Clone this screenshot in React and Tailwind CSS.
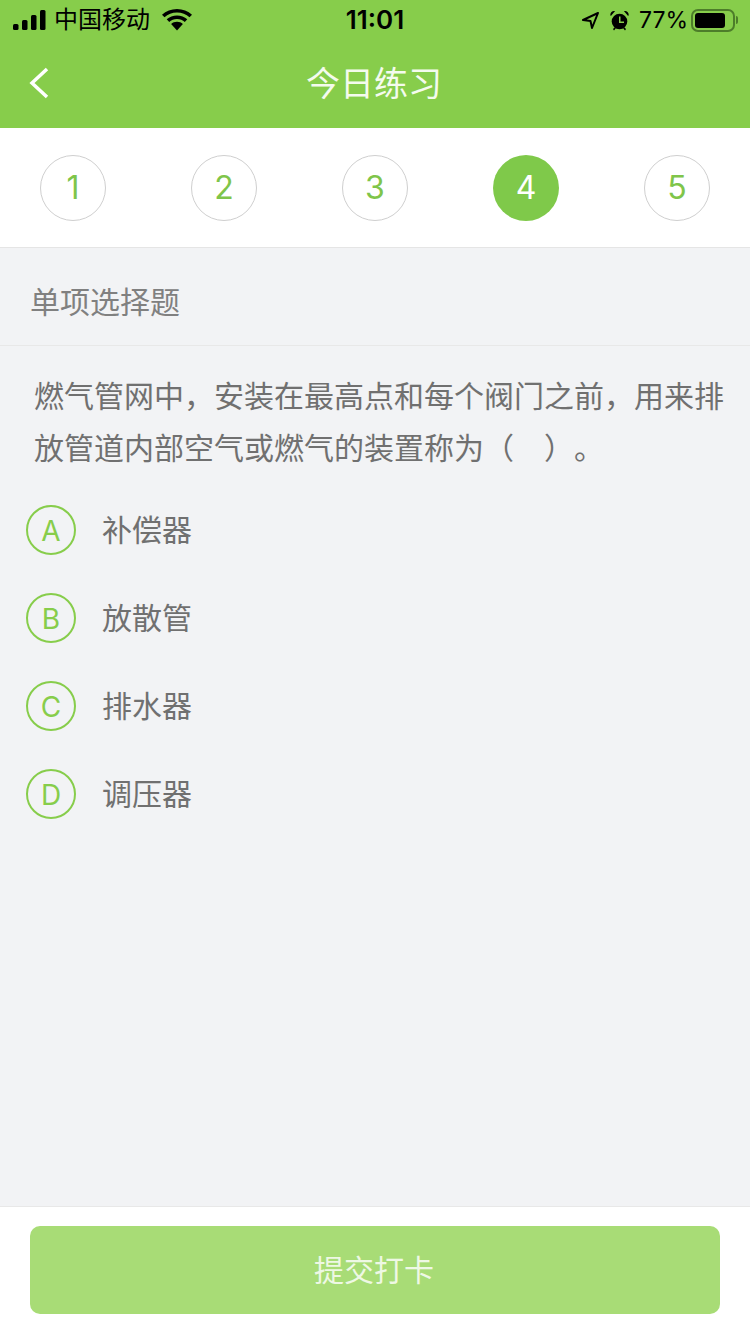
import React from 'react';

const font = "font-['Inter','Noto_Sans_CJK_SC',sans-serif]";

const steps = [1, 2, 3, 4, 5];
const options = [
  { key: 'A', text: '补偿器' },
  { key: 'B', text: '放散管' },
  { key: 'C', text: '排水器' },
  { key: 'D', text: '调压器' },
];

const StatusBar = () => (
  <div className="relative flex h-[40px] items-center justify-between pl-[13px] pr-[12px] text-black">
    <div className="flex items-center">
      <svg width="33" height="20" viewBox="0 0 33 20" fill="currentColor">
        <rect x="0" y="14" width="5.500" height="6" rx="1.500" />
        <rect x="9" y="10" width="5.500" height="10" rx="1.500" />
        <rect x="18" y="5" width="5.500" height="15" rx="1.500" />
        <rect x="27" y="0" width="5.500" height="20" rx="1.500" />
      </svg>
      <span className="ml-[8px] text-[24px] leading-none">中国移动</span>
      <svg className="ml-[12px]" width="30" height="22" viewBox="0 0 30 22" fill="currentColor">
        <path d="M15 3.500c4.800 0 9.200 1.800 12.500 4.800L30 5.700C26 2.200 20.800 0 15 0S4 2.200 0 5.700l2.500 2.600C5.800 5.300 10.200 3.500 15 3.500Z" />
        <path d="M15 10c3 0 5.700 1.100 7.800 2.900l2.500-2.600C22.500 7.900 18.900 6.400 15 6.400S7.500 7.900 4.700 10.300l2.500 2.600C9.300 11.100 12 10 15 10Z" />
        <path d="M15 12.800c-2.300 0-4.400.9-5.900 2.200l5.900 6.500 5.900-6.500c-1.500-1.300-3.600-2.200-5.900-2.200Z" />
      </svg>
    </div>
    <span className="absolute left-0 right-0 text-center text-[26px] font-semibold leading-none">11:01</span>
    <div className="relative flex items-center">
      <svg width="19" height="19" viewBox="0 0 19 19" fill="none" stroke="currentColor" strokeWidth="2">
        <path d="M17 2 2 9l7.500 1 1.500 7Z" strokeLinejoin="round" />
      </svg>
      <svg className="ml-[10px]" width="19" height="21" viewBox="0 0 19 21" fill="currentColor">
        <circle cx="9.500" cy="11.500" r="7.800" />
        <path d="M.5 5.500a3.600 3.600 0 0 1 4.600-4.400L.9 5.900ZM18.500 5.500a3.600 3.600 0 0 0-4.600-4.400l4.200 4.800Z" />
        <path d="M9 6.500h1.500v5h3.500V13H9Z" fill="#87cd4b" />
        <path d="M3 19l2-2 1 1-2 2.500ZM16 19l-2-2-1 1 2 2.500Z" />
      </svg>
      <span className="ml-[10px] text-[23px] leading-none">77%</span>
      <div className="ml-[3px] flex h-[23px] w-[44px] items-center rounded-[7px] border-2 border-[#4d7d2a] p-[2px]">
        <div className="h-full w-[30px] rounded-[3px] bg-black" />
      </div>
      <div className="ml-[1px] h-[8px] w-[2px] rounded-r-sm bg-[#4d7d2a]" />
    </div>
  </div>
);

const App = () => {
  return (
    <div className={`${font} flex h-[1334px] w-[750px] flex-col bg-[#f2f3f5]`}>
      {/* Header */}
      <div className="bg-[#87cd4b]">
        <StatusBar />
        <div className="relative flex h-[88px] items-center justify-center pr-[2px]">
          <svg className="absolute left-[29px] top-[27px]" width="20" height="32" viewBox="0 0 20 32" fill="none" stroke="white" strokeWidth="3.500">
            <path d="M18 2 3 16l15 14" />
          </svg>
          <span className="text-[34px] leading-none text-[#f4fbee]">今日练习</span>
        </div>
      </div>

      {/* Question numbers */}
      <div className="flex h-[120px] items-center justify-between border-b border-[#e5e5e5] bg-white px-[40px]">
        {steps.map((step) =>
          step === 4 ? (
            <div key={step} className="flex h-[66px] w-[66px] items-center justify-center rounded-full bg-[#7fc94a] text-[32px] text-white">
              {step}
            </div>
          ) : (
            <div key={step} className="flex h-[66px] w-[66px] items-center justify-center rounded-full border border-[#cfcfcf] text-[32px] text-[#7fc54a]">
              {step}
            </div>
          )
        )}
      </div>

      {/* Question */}
      <div className="flex h-[98px] items-center border-b border-[#e8e8e8] pl-[30px] pt-[10px] text-[30px] leading-none text-[#808080]">
        单项选择题
      </div>
      <div className="pl-[34px] pr-[24px] pt-[24px] text-[30px] leading-[52px] text-[#707070] [text-spacing-trim:space-all]">
        燃气管网中，安装在最高点和每个阀门之前，用来排放管道内部空气或燃气的装置称为（　）。
      </div>

      {/* Options */}
      <div className="flex flex-col gap-[38px] pl-[26px] pt-[31px]">
        {options.map((option) => (
          <div key={option.key} className="flex items-center">
            <div className="flex h-[50px] w-[50px] items-center justify-center rounded-full border-2 border-[#87cd4b] pt-px text-[28px] text-[#87cd4b]">
              {option.key}
            </div>
            <span className="ml-[26px] text-[30px] leading-none text-[#707070]">{option.text}</span>
          </div>
        ))}
      </div>

      {/* Submit */}
      <div className="mt-auto flex h-[128px] border-t border-[#e8e8e8] bg-white px-[30px] pt-[19px]">
        <button className="h-[88px] w-full rounded-[10px] bg-[#a8dc76] pr-[2px] text-[30px] text-[#eef8e4]">提交打卡</button>
      </div>
    </div>
  );
};

export default App;
